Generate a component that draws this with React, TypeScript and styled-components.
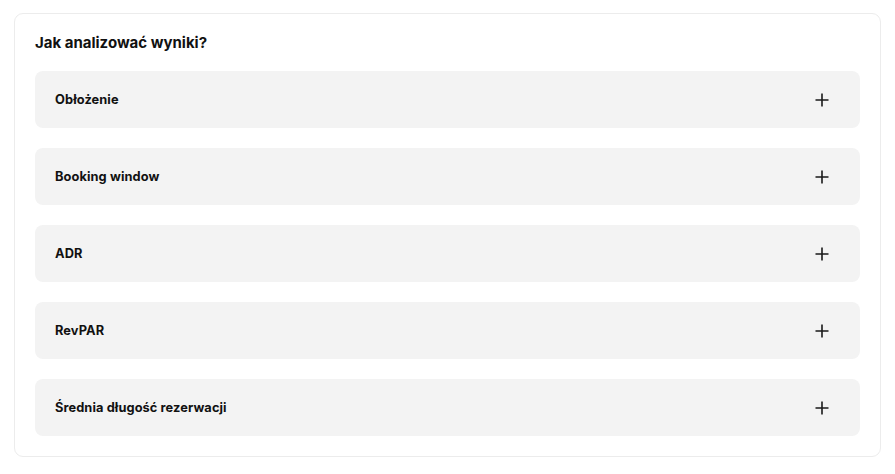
import React from "react";
import styled, { createGlobalStyle } from "styled-components";

const Global = createGlobalStyle`
  html, body { margin: 0; padding: 0; background: #ffffff; }
  body { font-family: "Inter", "Noto Sans", sans-serif; color: #111; }
`;

const Page = styled.div`
  padding: 13px 14px 17px 14px;
`;

const Card = styled.section`
  border: 1px solid #ececec;
  border-radius: 9px;
  background: #fff;
  padding: 19px 20px 20px 20px;
`;

const Title = styled.h2`
  margin: 0 0 18px 0;
  font-size: 15px;
  line-height: 20px;
  font-weight: 700;
  color: #111;
`;

const List = styled.div`
  display: flex;
  flex-direction: column;
  gap: 20px;
`;

const Item = styled.button`
  all: unset;
  box-sizing: border-box;
  height: 57px;
  border-radius: 8px;
  background: #f3f3f3;
  display: flex;
  align-items: center;
  justify-content: space-between;
  padding: 0 31px 0 20px;
  cursor: pointer;
`;

const Label = styled.span`
  font-size: 12.8px;
  letter-spacing: 0.1px;
  font-weight: 700;
  color: #111;
`;

const Plus = () => (
  <svg width="14" height="14" viewBox="0 0 14 14" aria-hidden="true">
    <path d="M7 0.5V13.5M0.5 7H13.5" stroke="#1a1a1a" strokeWidth="1.6" />
  </svg>
);

const items = ["Obłożenie", "Booking window", "ADR", "RevPAR", "Średnia długość rezerwacji"];

export default function App() {
  return (
    <>
      <Global />
      <Page>
        <Card>
          <Title>Jak analizować wyniki?</Title>
          <List>
            {items.map((t) => (
              <Item key={t}>
                <Label>{t}</Label>
                <Plus />
              </Item>
            ))}
          </List>
        </Card>
      </Page>
    </>
  );
}
